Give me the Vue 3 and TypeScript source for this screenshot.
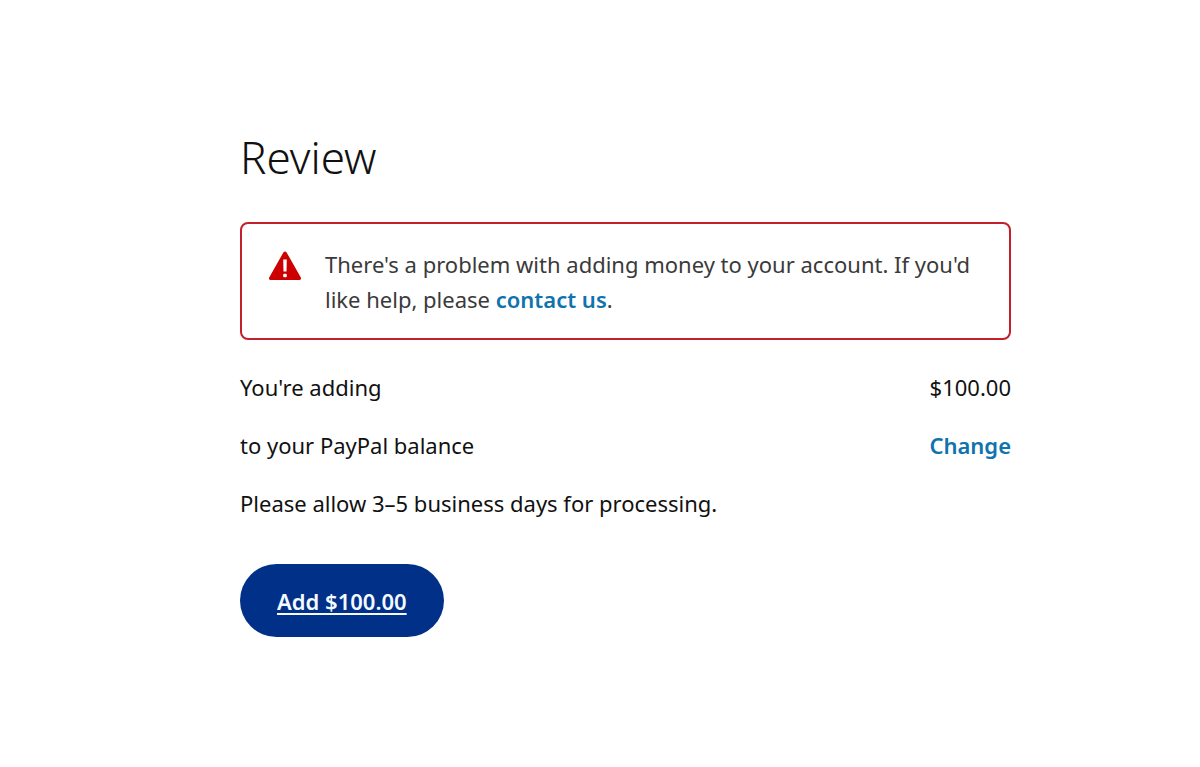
<script setup lang="ts">
interface Transfer {
  amount: string
  destination: string
}

const transfer: Transfer = {
  amount: '$100.00',
  destination: 'to your PayPal balance',
}
</script>

<template>
  <main class="review">
    <h1 class="title">Review</h1>

    <section class="alert" role="alert">
      <svg class="alert-icon" viewBox="0 0 34 30" aria-hidden="true">
        <path
          d="M15.4 1.4a2 2 0 0 1 3.2 0L32.8 26.6A1.6 1.6 0 0 1 31.4 29H2.6a1.6 1.6 0 0 1-1.4-2.4Z"
          fill="#cc0000"
        />
        <path d="M15.2 8.5h3.6l-.3 12h-3Z" fill="#fff" />
        <rect x="15.2" y="22.8" width="3.6" height="3.4" rx="1" fill="#fff" />
      </svg>
      <p class="alert-text">
        There's a problem with adding money to your account. If you'd like help, please
        <a class="link" href="#contact">contact us</a>.
      </p>
    </section>

    <div class="details">
      <div class="row">
        <span>You're adding</span>
        <span>{{ transfer.amount }}</span>
      </div>
      <div class="row">
        <span>{{ transfer.destination }}</span>
        <a class="link" href="#change">Change</a>
      </div>
      <p class="row">Please allow 3–5 business days for processing.</p>
    </div>

    <button class="submit" type="button">Add {{ transfer.amount }}</button>
  </main>
</template>

<style>
body {
  margin: 0;
  background: #fff;
}
</style>

<style scoped>
.review {
  box-sizing: border-box;
  padding: 125px 189px 64px 240px;
  color: #111;
  font-family: 'Noto Sans', 'Open Sans', sans-serif;
  font-size: 22px;
  line-height: 35px;
}

.title {
  margin: 0 0 33px;
  font-size: 44px;
  font-weight: 300;
  line-height: 64px;
}

.alert {
  display: flex;
  gap: 23px;
  padding: 23px 24px 21px 26px;
  border: 2px solid #c4202c;
  border-radius: 8px;
}

.alert-icon {
  flex: none;
  width: 34px;
  height: 30px;
  margin-top: 4px;
}

.alert-text {
  margin: 0;
  color: #3a3a3a;
}

.link {
  color: #0f73ad;
  font-weight: 600;
  text-decoration: none;
}

.details {
  display: flex;
  flex-direction: column;
  gap: 23px;
  margin: 30px 0 43px;
}

.row {
  display: flex;
  justify-content: space-between;
  margin: 0;
}

.submit {
  padding: 20px 37px 18px;
  border: 0;
  border-radius: 37px;
  background: #003087;
  color: #f4faff;
  font: inherit;
  font-weight: 600;
  text-decoration: underline;
  text-decoration-skip-ink: none;
  text-decoration-thickness: 2px;
  text-underline-offset: 3px;
  cursor: pointer;
}
</style>
